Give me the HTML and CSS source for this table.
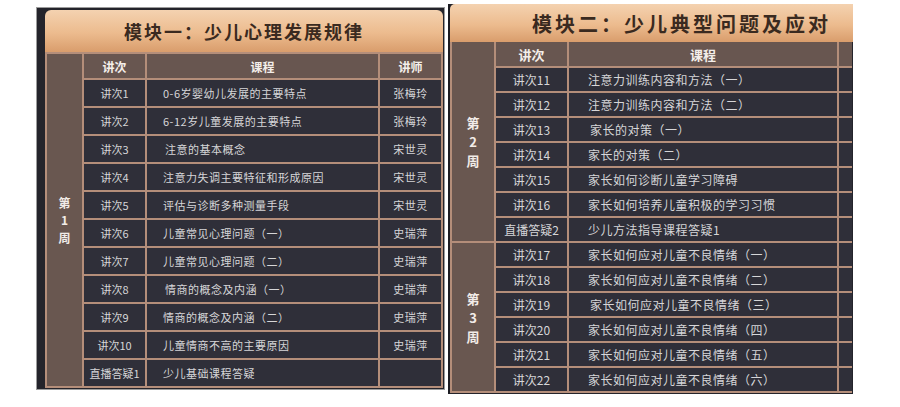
FILE: index.html
```html
<!DOCTYPE html>
<html lang="zh-CN">
<head>
<meta charset="utf-8">
<title>课程安排</title>
<link rel="stylesheet" href="styles.css">
</head>
<body>
<div class="page">
  <section class="panel panel-left">
    <h2 class="title">模块一：少儿心理发展规律</h2>
    <div class="grid grid-left">
      <div class="week week-1"><span>第</span><span>1</span><span>周</span></div>
      <div class="cell head">讲次</div><div class="cell head">课程</div><div class="cell head">讲师</div>
      <div class="cell num">讲次1</div><div class="cell course">0-6岁婴幼儿发展的主要特点</div><div class="cell teacher">张梅玲</div>
      <div class="cell num">讲次2</div><div class="cell course">6-12岁儿童发展的主要特点</div><div class="cell teacher">张梅玲</div>
      <div class="cell num">讲次3</div><div class="cell course indent">注意的基本概念</div><div class="cell teacher">宋世灵</div>
      <div class="cell num">讲次4</div><div class="cell course">注意力失调主要特征和形成原因</div><div class="cell teacher">宋世灵</div>
      <div class="cell num">讲次5</div><div class="cell course">评估与诊断多种测量手段</div><div class="cell teacher">宋世灵</div>
      <div class="cell num">讲次6</div><div class="cell course">儿童常见心理问题（一）</div><div class="cell teacher">史瑞萍</div>
      <div class="cell num">讲次7</div><div class="cell course">儿童常见心理问题（二）</div><div class="cell teacher">史瑞萍</div>
      <div class="cell num">讲次8</div><div class="cell course indent">情商的概念及内涵（一）</div><div class="cell teacher">史瑞萍</div>
      <div class="cell num">讲次9</div><div class="cell course">情商的概念及内涵（二）</div><div class="cell teacher">史瑞萍</div>
      <div class="cell num">讲次10</div><div class="cell course">儿童情商不高的主要原因</div><div class="cell teacher">史瑞萍</div>
      <div class="cell num">直播答疑1</div><div class="cell course">少儿基础课程答疑</div><div class="cell teacher"></div>
    </div>
  </section>
  <section class="panel panel-right">
    <h2 class="title">模块二：少儿典型问题及应对</h2>
    <div class="grid grid-right">
      <div class="week week-2"><span>第</span><span>2</span><span>周</span></div>
      <div class="week week-3"><span>第</span><span>3</span><span>周</span></div>
      <div class="cell head">讲次</div><div class="cell head">课程</div><div class="cell head"></div>
      <div class="cell num">讲次11</div><div class="cell course">注意力训练内容和方法（一）</div><div class="cell teacher"></div>
      <div class="cell num">讲次12</div><div class="cell course">注意力训练内容和方法（二）</div><div class="cell teacher"></div>
      <div class="cell num">讲次13</div><div class="cell course indent">家长的对策（一）</div><div class="cell teacher"></div>
      <div class="cell num">讲次14</div><div class="cell course">家长的对策（二）</div><div class="cell teacher"></div>
      <div class="cell num">讲次15</div><div class="cell course">家长如何诊断儿童学习障碍</div><div class="cell teacher"></div>
      <div class="cell num">讲次16</div><div class="cell course">家长如何培养儿童积极的学习习惯</div><div class="cell teacher"></div>
      <div class="cell num">直播答疑2</div><div class="cell course">少儿方法指导课程答疑1</div><div class="cell teacher"></div>
      <div class="cell num">讲次17</div><div class="cell course">家长如何应对儿童不良情绪（一）</div><div class="cell teacher"></div>
      <div class="cell num">讲次18</div><div class="cell course">家长如何应对儿童不良情绪（二）</div><div class="cell teacher"></div>
      <div class="cell num">讲次19</div><div class="cell course indent">家长如何应对儿童不良情绪（三）</div><div class="cell teacher"></div>
      <div class="cell num">讲次20</div><div class="cell course">家长如何应对儿童不良情绪（四）</div><div class="cell teacher"></div>
      <div class="cell num">讲次21</div><div class="cell course">家长如何应对儿童不良情绪（五）</div><div class="cell teacher"></div>
      <div class="cell num">讲次22</div><div class="cell course">家长如何应对儿童不良情绪（六）</div><div class="cell teacher"></div>
    </div>
  </section>
</div>
</body>
</html>
```
FILE: styles.css
```css
* { box-sizing: border-box; }
html, body { margin: 0; padding: 0; background: #ffffff; }
body {
  font-family: "Noto Sans CJK SC", "Noto Sans", sans-serif;
  width: 900px;
  height: 407px;
  overflow: hidden;
}
.page {
  display: flex;
  align-items: flex-start;
  padding-left: 36px;
  gap: 3px;
}
.panel {
  background: #24242b;
  display: flex;
  flex-direction: column;
}
.panel-left {
  margin-top: 7px;
  width: 409px;
  height: 383px;
  border: 1px solid #9c9c9c;
  padding: 2px 1px 0 8px;
}
.panel-right {
  margin-top: 4px;
  width: 405px;
  height: 390px;
  border-left: 2px solid #1c1c22;
  padding-left: 0;
  overflow: hidden;
}
.title {
  margin: 0;
  background: linear-gradient(to bottom, #f4d2b0 0%, #ecbb8e 55%, #d99d6c 100%);
  color: #3a2a20;
  font-weight: 700;
  text-align: center;
  border-radius: 6px 6px 0 0;
  display: flex;
  align-items: center;
  justify-content: center;
}
.panel-left .title {
  height: 42px;
  font-size: 18px;
  letter-spacing: 2px;
}
.panel-right .title {
  height: 38px;
  font-size: 20px;
  letter-spacing: 3px;
  padding-left: 60px;
  border-radius: 5px 0 0 0;
}
.grid {
  display: grid;
  background: #b48e7a;
  gap: 2px;
}
.grid-left {
  grid-template-columns: 35px 61px 231px 61px;
  grid-template-rows: 24px repeat(11, 26px);
  border: 2px solid #b48e7a;
}
.grid-right {
  grid-template-columns: 42px 71px 268px 13px;
  grid-template-rows: 24px repeat(13, 23px);
  border-left: 2px solid #b48e7a;
  border-bottom: 2px solid #b48e7a;
  width: 402px;
}
.week {
  grid-column: 1;
  background: #695750;
  color: #f2ece8;
  font-weight: 700;
  font-size: 12px;
  display: flex;
  flex-direction: column;
  align-items: center;
  justify-content: center;
  line-height: 17.5px;
}
.week-1 { grid-row: 1 / span 12; }
.week-2 { grid-row: 1 / span 8; font-size: 13px; line-height: 19px; }
.week-3 { grid-row: 9 / span 6; font-size: 13px; line-height: 19px; }
.cell {
  background: #2f2f39;
  color: #d6d6d8;
  font-size: 11px;
  letter-spacing: 0.5px;
  display: flex;
  align-items: center;
  white-space: nowrap;
  overflow: hidden;
}
.grid-right .cell { font-size: 12px; }
.cell.head {
  background: #685650;
  color: #f4eeea;
  font-weight: 700;
  font-size: 12px;
  justify-content: center;
  letter-spacing: 0;
}
.grid-right .cell.head { font-size: 13px; }
.cell.num { justify-content: center; letter-spacing: 0; }
.cell.teacher { justify-content: center; }
.cell.course { padding-left: 16px; }
.grid-right .cell.course { padding-left: 19px; }
.grid-left .cell.course.indent { padding-left: 18px; }
.grid-right .cell.course.indent { padding-left: 21px; }
```
